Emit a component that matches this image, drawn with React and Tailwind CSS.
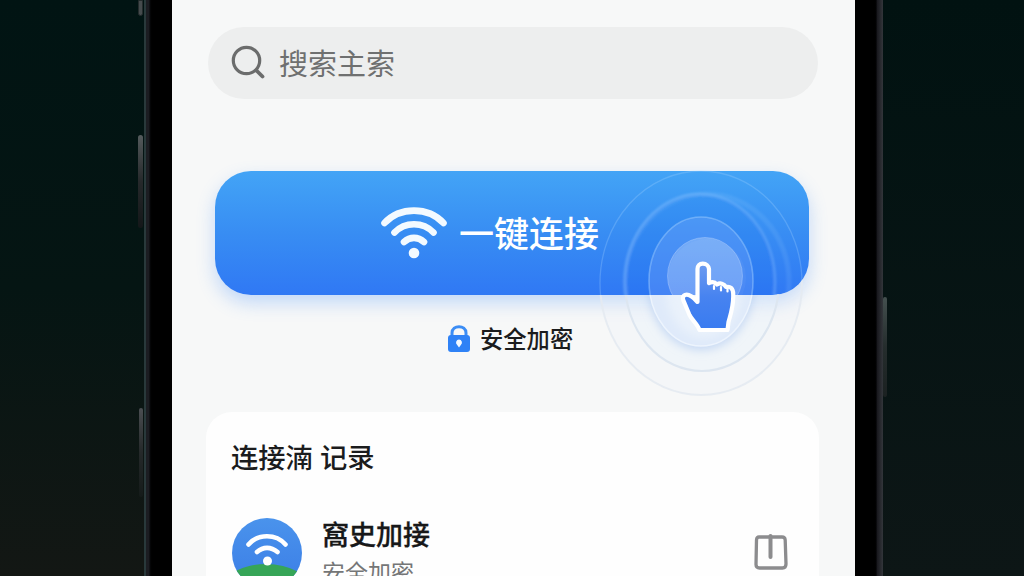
// App.jsx
const records = [{ name: "窩史加接", status: "安全加密" }];

function SearchIcon() {
  return (
    <svg width="36" height="36" viewBox="0 0 36 36" fill="none" stroke="#6b6c6c" strokeWidth="3.2" strokeLinecap="round">
      <circle cx="15.5" cy="15.5" r="13.2" />
      <path d="M25.5 25.5 L31.5 31.5" strokeWidth="3.8" />
    </svg>
  );
}

function WifiIcon() {
  return (
    <svg width="68" height="54" viewBox="0 0 68 54" fill="none" stroke="#f3faff" strokeWidth="6.6" strokeLinecap="round">
      <path d="M4.5 17 C20 0.5 48 0.5 63.5 17" />
      <path d="M14.5 26.5 C25 15.5 43 15.5 53.5 26.5" />
      <path d="M24 36 C30 30.5 38 30.5 44 36" />
      <circle cx="34" cy="47" r="5.3" fill="#f3faff" stroke="none" />
    </svg>
  );
}

function LockIcon() {
  return (
    <svg width="22" height="27" viewBox="0 0 22 27">
      <path d="M4 12 V8 C4 -0.4 18 -0.4 18 8 V12" fill="none" stroke="#3c8df5" strokeWidth="3" />
      <rect x="0" y="10" width="22" height="17" rx="3" fill="#2f82f6" />
      <path d="M11 14.5 a3 3 0 0 1 2 5.2 L11 22.5 L9 19.7 a3 3 0 0 1 2 -5.2" fill="#f5faff" />
    </svg>
  );
}

function RecordIcon() {
  return (
    <svg width="70" height="70" viewBox="0 0 70 70">
      <defs>
        <clipPath id="avatar">
          <circle cx="35" cy="35" r="35" />
        </clipPath>
        <linearGradient id="sky" x1="0" y1="0" x2="0" y2="1">
          <stop offset="0" stopColor="#4a93ec" />
          <stop offset="1" stopColor="#3b7de6" />
        </linearGradient>
      </defs>
      <g clipPath="url(#avatar)">
        <rect width="70" height="70" fill="url(#sky)" />
        <ellipse cx="34" cy="71" rx="44" ry="25" fill="#36a557" />
      </g>
      <g fill="none" stroke="#fff" strokeWidth="4.6" strokeLinecap="round">
        <path d="M16.5 26.5 C26 15.5 44 15.5 53.5 26.5" />
        <path d="M25 34 C31 28.5 39 28.5 45.5 34" />
      </g>
      <circle cx="35.5" cy="43" r="4.5" fill="#fff" />
    </svg>
  );
}

function BoxIcon() {
  return (
    <svg width="34" height="38" viewBox="0 0 34 38" fill="none" stroke="#8c8c8e" strokeLinecap="round" strokeLinejoin="round">
      <path d="M5 4 H28 Q31 4 31.2 7 L32 31 Q32 35 28.5 35 H5.5 Q2 35 2 31.5 L2.5 7 Q2.7 4 5 4 Z" strokeWidth="3.3" />
      <path d="M16.5 3 V24" strokeWidth="4" />
    </svg>
  );
}

// Tap ripple and pointing hand, floating over the connect button
function TapRipple() {
  return (
    <svg className="absolute -top-[6px] right-0 pointer-events-none" width="220" height="240" viewBox="590 165 220 240" fill="none">
      <defs>
        <clipPath id="inside">
          <path d="M590 165 H773 V171 A36 36 0 0 1 809 207 V259 A36 36 0 0 1 773 295 H590 Z" />
        </clipPath>
        <clipPath id="below">
          <path d="M590 295 H773 A36 36 0 0 0 809 259 H810 V405 H590 Z" />
        </clipPath>
        <linearGradient id="core" x1="0" y1="0" x2="0" y2="1">
          <stop offset="0" stopColor="#fff" stopOpacity="0.24" />
          <stop offset="1" stopColor="#fff" stopOpacity="0.18" />
        </linearGradient>
        <linearGradient id="hand" x1="0" y1="0" x2="0" y2="1">
          <stop offset="0" stopColor="#6c9bf0" />
          <stop offset="0.5" stopColor="#4783f0" />
          <stop offset="1" stopColor="#397bf0" />
        </linearGradient>
        <filter id="soft" x="-20%" y="-20%" width="140%" height="140%">
          <feGaussianBlur stdDeviation="1" />
        </filter>
        <filter id="shade" x="-20%" y="-20%" width="140%" height="140%">
          <feGaussianBlur stdDeviation="5" />
        </filter>
      </defs>

      <g clipPath="url(#inside)">
        <ellipse cx="701" cy="283" rx="101" ry="112" stroke="#a5d5ff" strokeOpacity="0.28" strokeWidth="1.3" />
        <ellipse cx="707" cy="282" rx="82" ry="88" stroke="#a5d5ff" strokeOpacity="0.12" strokeWidth="5" filter="url(#soft)" />
        <ellipse cx="700" cy="282" rx="75" ry="88" fill="#1a62ef" fillOpacity="0.1" stroke="#8fc5ff" strokeOpacity="0.36" strokeWidth="2.5" filter="url(#soft)" />
        <ellipse cx="701" cy="281" rx="52" ry="64" fill="#9fb9ff" fillOpacity="0.22" stroke="#a5d0ff" strokeOpacity="0.45" strokeWidth="1.6" />
        <circle cx="707" cy="278" r="39" fill="#fff" fillOpacity="0.04" />
        <ellipse cx="705" cy="276" rx="37.5" ry="38.5" fill="url(#core)" stroke="#c9dcff" strokeOpacity="0.35" strokeWidth="1" />
      </g>

      <g clipPath="url(#below)">
        <ellipse cx="701" cy="283" rx="101" ry="112" fill="#eaf1fb" fillOpacity="0.2" stroke="#e4eaf1" strokeOpacity="0.9" strokeWidth="2" />
        <ellipse cx="702" cy="282" rx="77" ry="89" fill="#e9f1fc" fillOpacity="0.3" stroke="#dde6f0" strokeWidth="2.2" />
        <ellipse cx="701" cy="285" rx="53" ry="65" fill="#a9c5f0" fillOpacity="0.6" filter="url(#shade)" />
        <ellipse cx="701" cy="281" rx="52" ry="65" fill="#dfeafa" stroke="#edf4fd" strokeWidth="1.5" />
        <ellipse cx="704" cy="290" rx="38" ry="48" fill="#f2f6fc" fillOpacity="0.6" filter="url(#shade)" />
      </g>

      <path
        d="M702.8 263.7 C699.3 263.7 697.5 266 697.5 269 V302 C694 298 689 293.5 685 295 C681.5 296.5 683 300 684.5 303 L689.5 315 C692 320 697.5 324 699.5 330 H727.5 L728.5 322 C731 313 733.2 307 733.2 297 V294 C733.2 288 730 286 726 287 C724 283.5 720 282.5 717 284.5 C715 282 712 281.5 709 283 V269 C708.8 266 706.3 263.7 702.8 263.7 Z"
        fill="url(#hand)"
        stroke="#fff"
        strokeWidth="4.2"
        strokeLinejoin="round"
      />
      <path d="M714 286 V289 M721 287 V290.5 M727.5 289 V291.5" stroke="#fff" strokeWidth="2.2" strokeLinecap="round" />
    </svg>
  );
}

export default function App() {
  return (
    <div className="flex h-[576px] w-[1024px] justify-start overflow-hidden bg-[#071514] font-['Noto_Sans_CJK_SC',sans-serif]">
      {/* Left side of the phone with its buttons */}
      <div className="flex w-[144px] shrink-0 flex-col items-end bg-linear-to-b from-[#011413] via-[#051513] to-[#131714]">
        <div className="mr-[1px] h-[16px] w-[5px] rounded-b border border-[#252c2d] bg-[#454b4d]" />
        <div className="mt-[119px] mr-[1px] h-[93px] w-[5px] rounded bg-linear-to-b from-[#555b5d] via-[#26292b] to-[#141719]" />
        <div className="mt-[180px] mr-[1px] h-[89px] w-[4px] rounded bg-linear-to-b from-[#4b4e52] via-[#25292a] to-[#151b1a]" />
      </div>
      <div className="w-[28px] shrink-0 border-l-2 border-[#29393b] bg-linear-to-r from-[#1c1d22] from-10% via-[#000] via-25% to-black" />

      <main className="flex w-[683px] shrink-0 flex-col bg-[#f7f8f8]">
        <div className="mt-[27px] ml-9 flex h-[72px] w-[610px] shrink-0 items-center rounded-full bg-[#edeeee] pl-[23px]">
          <SearchIcon />
          <span className="-mt-[1px] ml-[12px] text-[29px] leading-none text-[#6f7070]">搜索主索</span>
        </div>

        <div className="relative mt-[72px] mr-[45px] ml-[43px] h-[124px] shrink-0">
          <button className="flex h-[124px] w-[594px] items-center rounded-[36px] bg-linear-to-b from-[#43a4f6] via-[#388df3] to-[#3078f4] pl-[165px] shadow-[0_8px_18px_rgba(80,150,250,0.32)]">
            <WifiIcon />
            <span className="-mt-[3px] ml-[11px] text-[35px] leading-none font-medium text-white">一键连接</span>
          </button>
          <TapRipple />
        </div>

        <div className="mt-[29px] ml-[276px] flex h-[29px] shrink-0 items-center gap-[10px]">
          <LockIcon />
          <span className="text-[23.3px] leading-none font-medium text-[#1b1c1d]">安全加密</span>
        </div>

        <section className="mt-[59px] ml-[34px] h-[200px] w-[613px] shrink-0 rounded-t-[26px] bg-[#fefefe] px-[25px] pt-[29px]">
          <h2 className="text-[27.3px] leading-[30px] font-medium whitespace-pre text-[#1b1c1d] [word-spacing:1px]">连接湳 记录</h2>
          {records.map((record) => (
            <div key={record.name} className="mt-[47px] ml-[1px] flex">
              <RecordIcon />
              <div className="-mt-[1px] ml-[20px] flex-1">
                <div className="text-[27px] leading-[34px] font-medium text-[#171819] [-webkit-text-stroke:0.3px_#171819]">{record.name}</div>
                <div className="mt-[4px] text-[23px] leading-[32px] text-[#757677]">{record.status}</div>
              </div>
              <div className="mt-[15px] mr-[6px]">
                <BoxIcon />
              </div>
            </div>
          ))}
        </section>
      </main>

      <div className="w-[28px] shrink-0 bg-linear-to-r from-black from-70% via-[#1a1a1f] via-80% to-[#33363b]" />
      <div className="flex-1 bg-linear-to-b from-[#011211] to-[#0d1616]">
        <div className="mt-[297px] h-[100px] w-[4px] rounded bg-linear-to-b from-[#44504f] via-[#252d2d] to-[#1b2121]" />
      </div>
    </div>
  );
}
